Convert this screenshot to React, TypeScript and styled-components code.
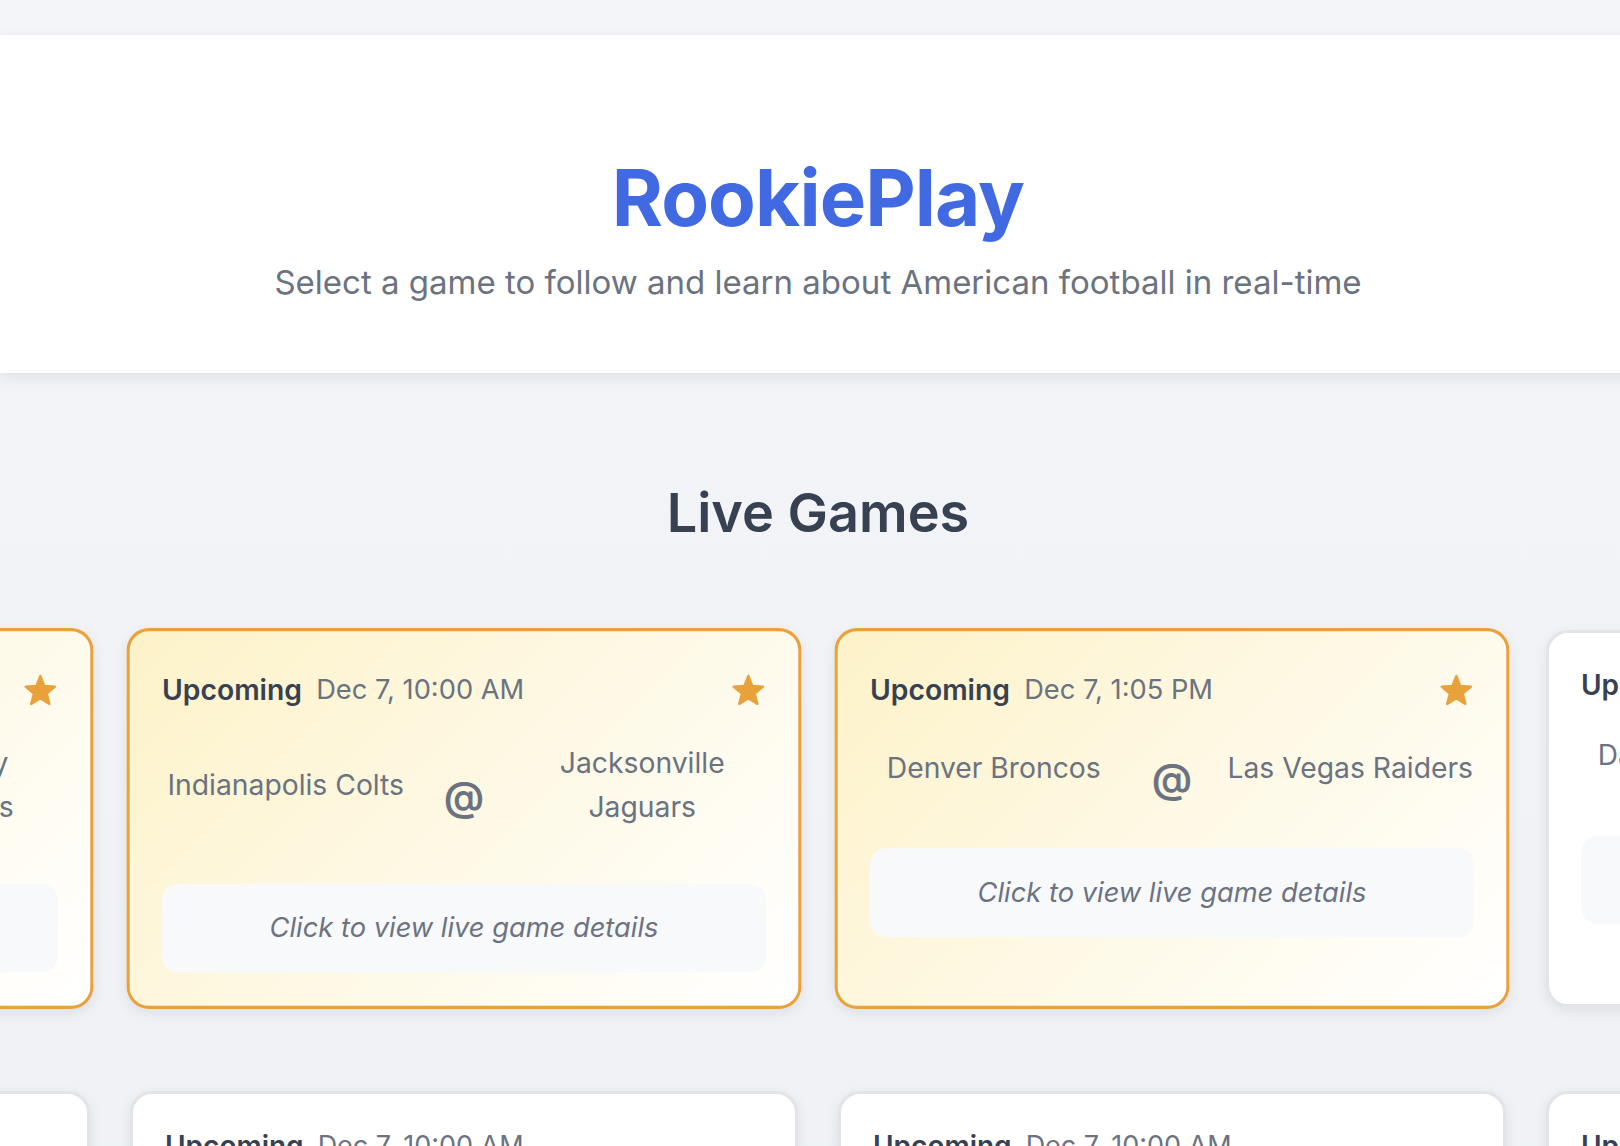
import React from "react";
import styled, { createGlobalStyle } from "styled-components";

const GlobalStyle = createGlobalStyle`
  html, body {
    margin: 0;
    padding: 0;
  }
  body {
    overflow: hidden;
    background: #f1f3f7;
    font-family: Inter, "Noto Sans", "Liberation Sans", sans-serif;
    -webkit-font-smoothing: antialiased;
  }
`;

const Page = styled.div`
  min-width: 1636px;
  min-height: 100vh;
  box-sizing: border-box;
  padding-top: 35px;
  background: linear-gradient(180deg, #f4f5f8 0%, #eef1f5 100%);
`;

const Header = styled.header`
  background: #ffffff;
  box-shadow: 0 4px 14px rgba(0, 0, 0, 0.09);
  padding: 116px 0 68px;
  text-align: center;
`;

const Title = styled.h1`
  margin: 0;
  font-size: 78px;
  line-height: 1.2;
  font-weight: 700;
  color: #4169e1;
  letter-spacing: -0.9px;
`;

const Subtitle = styled.p`
  margin: 14px 0 0;
  font-size: 33px;
  line-height: 1.4;
  font-weight: 400;
  color: #6b7280;
`;

const Main = styled.main`
  padding-top: 107px;
`;

const SectionTitle = styled.h2`
  margin: 0;
  text-align: center;
  font-size: 54px;
  line-height: 66px;
  font-weight: 600;
  color: #374151;
`;

const Grid = styled.div`
  margin-top: 84px;
  display: grid;
  grid-template-columns: repeat(4, 668px);
  column-gap: 40px;
  row-gap: 84px;
  justify-content: center;
`;

const Card = styled.div<{ $featured?: boolean }>`
  box-sizing: border-box;
  display: flex;
  flex-direction: column;
  padding: 32px 32px 33px;
  border-radius: 22px;
  border: 3px solid ${(p) => (p.$featured ? "#e9a23b" : "#e2e4e9")};
  background: ${(p) =>
    p.$featured
      ? "linear-gradient(135deg, #fdf2c8 0%, #fef8e2 45%, #ffffff 100%)"
      : "#ffffff"};
  box-shadow: 0 4px 14px rgba(0, 0, 0, 0.08);
  transform: ${(p) => (p.$featured ? "scale(1.01)" : "none")};
`;

const CardHeader = styled.div`
  display: flex;
  align-items: center;
`;

const Status = styled.span`
  font-size: 28px;
  line-height: 40px;
  font-weight: 600;
  color: #374151;
`;

const DateText = styled.span`
  margin-left: 14px;
  font-size: 27px;
  line-height: 40px;
  font-weight: 400;
  color: #6b7280;
`;

const StarWrap = styled.span`
  margin-left: auto;
  height: 52px;
  display: flex;
  align-items: center;
  color: #e9a23b;
`;

const Teams = styled.div`
  margin-top: 24px;
  display: flex;
  align-items: center;
  gap: 34px;
`;

const Team = styled.div`
  flex: 1;
  text-align: center;
  font-size: 28px;
  line-height: 44px;
  color: #6b7280;
  padding-bottom: 5px;
`;

const At = styled.div`
  margin-top: 18px;
  font-size: 40px;
  line-height: 40px;
  font-weight: 600;
  color: #6b7280;
`;

const DetailsBox = styled.div`
  margin-top: 49px;
  padding: 24px;
  border-radius: 16px;
  background: #f8f9fb;
  text-align: center;
  font-size: 27px;
  line-height: 40px;
  font-style: italic;
  color: #6b7280;
`;

const StarIcon = () => (
  <svg width="35" height="35" viewBox="0 0 24 24" aria-hidden="true">
    <polygon
      points="12,2.3 14.7,9.08 21.99,9.56 16.37,14.22 18.17,21.29 12,17.4 5.83,21.29 7.63,14.22 2.01,9.56 9.3,9.08"
      fill="currentColor"
      stroke="currentColor"
      strokeWidth="1.6"
      strokeLinejoin="round"
    />
  </svg>
);

type Game = {
  away: string;
  home: string;
  date: string;
  featured?: boolean;
};

const games: Game[] = [
  { away: "New Orleans Saints", home: "Tampa Bay Buccaneers", date: "Dec 7, 10:00 AM", featured: true },
  { away: "Indianapolis Colts", home: "Jacksonville Jaguars", date: "Dec 7, 10:00 AM", featured: true },
  { away: "Denver Broncos", home: "Las Vegas Raiders", date: "Dec 7, 1:05 PM", featured: true },
  { away: "Dallas Cowboys", home: "Detroit Lions", date: "Dec 7, 1:25 PM" },
  { away: "Seattle Seahawks", home: "Atlanta Falcons", date: "Dec 7, 10:00 AM" },
  { away: "Cincinnati Bengals", home: "Buffalo Bills", date: "Dec 7, 10:00 AM" },
  { away: "Tennessee Titans", home: "Cleveland Browns", date: "Dec 7, 10:00 AM" },
  { away: "Washington Commanders", home: "Minnesota Vikings", date: "Dec 7, 10:00 AM" },
];

const GameCard = ({ game }: { game: Game }) => (
  <Card $featured={game.featured}>
    <CardHeader>
      <Status>Upcoming</Status>
      <DateText>{game.date}</DateText>
      {game.featured && (
        <StarWrap>
          <StarIcon />
        </StarWrap>
      )}
    </CardHeader>
    <Teams>
      <Team>{game.away}</Team>
      <At>@</At>
      <Team>{game.home}</Team>
    </Teams>
    <DetailsBox>Click to view live game details</DetailsBox>
  </Card>
);

export default function App() {
  return (
    <>
      <GlobalStyle />
      <Page>
        <Header>
          <Title>RookiePlay</Title>
          <Subtitle>Select a game to follow and learn about American football in real-time</Subtitle>
        </Header>
        <Main>
          <SectionTitle>Live Games</SectionTitle>
          <Grid>
            {games.map((g) => (
              <GameCard key={g.away} game={g} />
            ))}
          </Grid>
        </Main>
      </Page>
    </>
  );
}
